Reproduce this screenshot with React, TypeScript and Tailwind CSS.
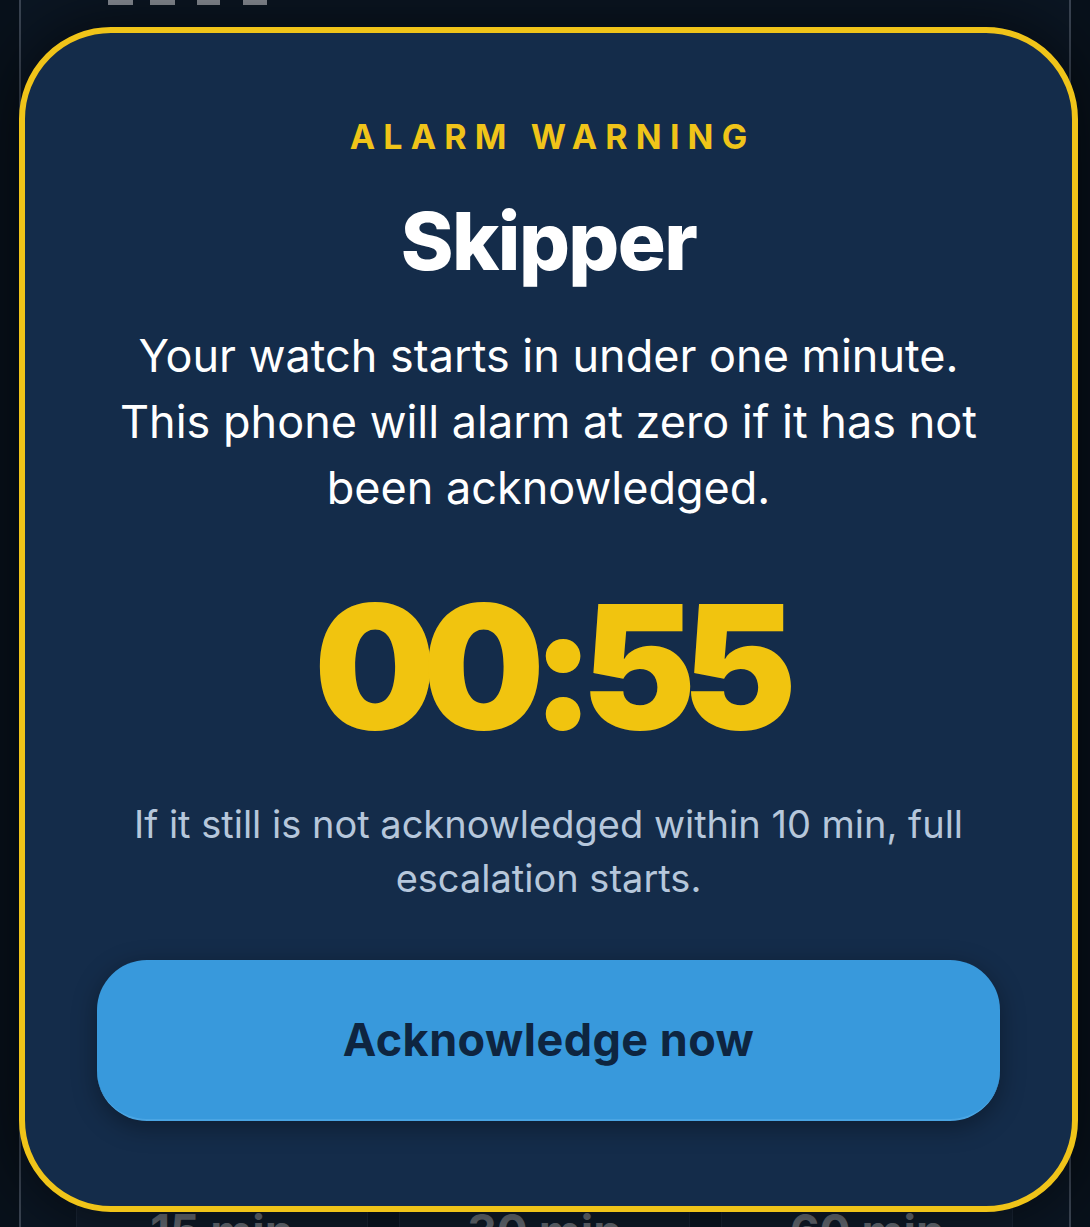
import React from 'react';

const durations = ['15 min', '30 min', '60 min'];

function BackgroundPage() {
  return (
    <div className="flex flex-col h-full mx-[19px] border-x-[2px] border-[#3a4452] bg-[#0b1623]">
      {/* bottom edge of the big clock heading, cut by the viewport */}
      <div className="flex items-start h-[5px] ml-[87px]">
        <div className="w-[25px] h-[5px] bg-[#8a8f97]" />
        <div className="w-[25px] h-[5px] bg-[#8a8f97] ml-[17px]" />
        <div className="w-[23px] h-[5px] bg-[#8a8f97] ml-[22px]" />
        <div className="w-[24px] h-[5px] bg-[#8a8f97] ml-[23px]" />
      </div>
      <div className="flex-1" />
      <div className="grid grid-cols-3 gap-[31px] ml-[55px] mr-[56px] h-[32px]">
        {durations.map(d => (
          <div key={d} className="flex justify-center pt-[12px] bg-[#101c2b] border border-[#1a2636] rounded-t-[14px]">
            <span className="text-[46px] leading-none font-bold text-[#6c727b] font-['Inter',sans-serif]">{d}</span>
          </div>
        ))}
      </div>
    </div>
  );
}

function AlarmWarning() {
  return (
    <div className="absolute left-[19px] top-[27px] w-[1059px] h-[1185px] rounded-[92px] border-[6px] border-[#f0c419] bg-[#142c4a] shadow-[0_0_70px_rgba(0,0,0,0.65)] flex flex-col items-center px-[72px] pt-[87px] font-['Inter',sans-serif] text-center">
      <p className="text-[34px] leading-[34px] font-bold tracking-[0.24em] pl-[0.24em] text-[#f0c419]">ALARM WARNING</p>
      <h1 className="mt-[47px] text-[80px] leading-[80px] font-extrabold tracking-[-0.02em] text-white">Skipper</h1>
      <p className="mt-[42px] max-w-[890px] text-[45px] leading-[66px] text-white">
        Your watch starts in under one minute. This phone will alarm at zero if it has not been acknowledged.
      </p>
      <div className="mt-[59px] text-[172px] leading-none font-black tracking-[-0.08em] text-[#f1c40f]">00:55</div>
      <p className="mt-[45px] max-w-[890px] text-[38px] leading-[54px] text-[#b6c7db]">
        If it still is not acknowledged within 10 min, full escalation starts.
      </p>
      <button className="mt-[55px] w-full h-[161px] rounded-[50px] bg-[#3899dc] border-b-[2px] border-[#4aa5e3] shadow-[0_6px_24px_rgba(0,0,0,0.35)] text-[45px] font-bold tracking-[0.01em] text-[#0e2540]">
        Acknowledge now
      </button>
    </div>
  );
}

export default function App() {
  return (
    <div className="relative w-[1090px] h-[1227px] overflow-hidden bg-[#08111b]">
      <BackgroundPage />
      <AlarmWarning />
    </div>
  );
}
